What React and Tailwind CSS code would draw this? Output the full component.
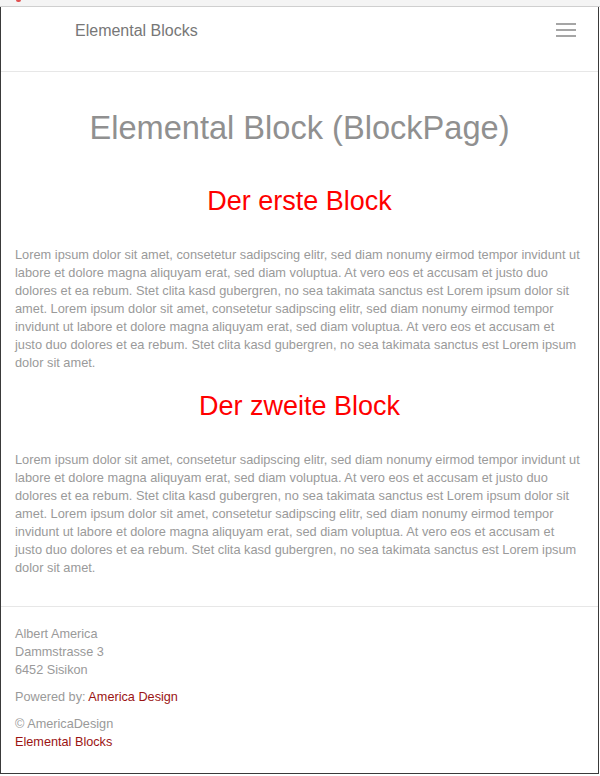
import { Menu } from "lucide-react";

const lorem =
  "Lorem ipsum dolor sit amet, consetetur sadipscing elitr, sed diam nonumy eirmod tempor invidunt ut labore et dolore magna aliquyam erat, sed diam voluptua. At vero eos et accusam et justo duo dolores et ea rebum. Stet clita kasd gubergren, no sea takimata sanctus est Lorem ipsum dolor sit amet. Lorem ipsum dolor sit amet, consetetur sadipscing elitr, sed diam nonumy eirmod tempor invidunt ut labore et dolore magna aliquyam erat, sed diam voluptua. At vero eos et accusam et justo duo dolores et ea rebum. Stet clita kasd gubergren, no sea takimata sanctus est Lorem ipsum dolor sit amet.";

const blocks = [
  { title: "Der erste Block", mt: "mt-[41px]" },
  { title: "Der zweite Block", mt: "mt-[19px]" },
];

function Hamburger() {
  return (
    <svg width="20" height="14" viewBox="0 0 20 14" className="text-[#888]">
      <path d="M0 1h20M0 7h20M0 13h20" stroke="currentColor" strokeWidth="1.6" />
    </svg>
  );
}

export default function App() {
  return (
    <div className="w-[600px] h-[776px] bg-white font-['Liberation_Sans',Arial,sans-serif] overflow-hidden">
      {/* browser strip */}
      <div className="h-[7px] bg-[#f4f4f4] border-b border-[#cfcfcf] relative">
        <span className="absolute left-[16px] top-0 w-[5px] h-[2px] bg-[#e05050] rounded-b" />
      </div>

      <div className="w-[599px] h-[767px] border-l border-r border-b border-[#3a3a3a] flex flex-col">
        {/* navbar */}
        <header className="h-[65px] border-b border-[#e7e7e7] flex items-start justify-between pt-[14px] pl-[74px] pr-[22px] shrink-0">
          <a className="text-[16px] leading-[20px] text-[#777]">Elemental Blocks</a>
          <div className="pt-[2px]">
            <Hamburger />
          </div>
        </header>

        <main className="px-[14px]">
          <h1 className="mt-[38px] text-center text-[32.6px] leading-[35px] text-[#909090]">
            Elemental Block (BlockPage)
          </h1>

          {blocks.map((b) => (
            <section key={b.title}>
              <h2 className={`${b.mt} text-center text-[27px] leading-[30px] text-[#f00]`}>{b.title}</h2>
              <p className="mt-[30px] text-[12.8px] leading-[18px] text-[#9a9a9a]">{lorem}</p>
            </section>
          ))}
        </main>

        <footer className="mt-[29px] border-t border-[#e7e7e7] pt-[18px] px-[14px] text-[12.7px] leading-[18px] text-[#9a9a9a]">
          <address className="not-italic">
            Albert America
            <br />
            Dammstrasse 3
            <br />
            6452 Sisikon
          </address>
          <p className="mt-[9px]">
            Powered by: <a className="text-[#9b1414]">America Design</a>
          </p>
          <p className="mt-[9px]">© AmericaDesign</p>
          <a className="block text-[#9b1414]">Elemental Blocks</a>
        </footer>
      </div>
    </div>
  );
}
